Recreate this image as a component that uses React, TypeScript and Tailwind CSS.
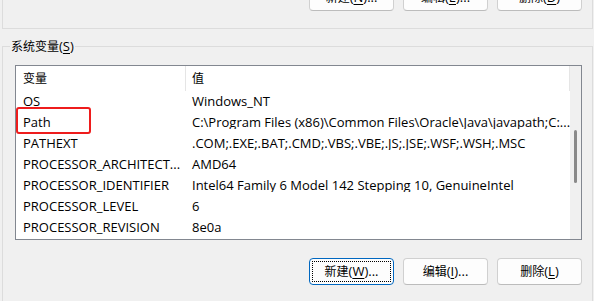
import React from "react";

const rows: [string, string][] = [
  ["OS", "Windows_NT"],
  ["Path", "C:\\Program Files (x86)\\Common Files\\Oracle\\Java\\javapath;C:..."],
  ["PATHEXT", ".COM;.EXE;.BAT;.CMD;.VBS;.VBE;.JS;.JSE;.WSF;.WSH;.MSC"],
  ["PROCESSOR_ARCHITECT...", "AMD64"],
  ["PROCESSOR_IDENTIFIER", "Intel64 Family 6 Model 142 Stepping 10, GenuineIntel"],
  ["PROCESSOR_LEVEL", "6"],
  ["PROCESSOR_REVISION", "8e0a"],
];

function Btn({ cjk, hot, tail, focused }: { cjk: string; hot: string; tail: string; focused?: boolean }) {
  return (
    <div
      className={
        focused
          ? "relative w-[85px] h-[27px] rounded-[4px] border border-[#0067c0] bg-[#fdfdfd] flex items-center justify-center"
          : "relative w-[85px] h-[27px] rounded-[4px] border border-[#d0d0d0] border-b-[#bcbcbc] bg-[#fdfdfd] flex items-center justify-center"
      }
    >
      {focused && <span className="absolute inset-[2px] border border-dotted border-black" />}
      <span className="text-[12px]">{cjk}</span>
      <span className="text-[13px]">
        (<span className="underline underline-offset-[2px]">{hot}</span>){tail}
      </span>
    </div>
  );
}

export default function App() {
  return (
    <div className="w-[594px] h-[301px] overflow-hidden bg-[#f0f0f0] text-black font-['Open_Sans','Noto_Sans_CJK_SC',sans-serif] text-[13px] leading-none">
      {/* upper group (user variables), only its bottom visible */}
      <div className="ml-[2px] mr-[1px] -mt-[20px] h-[49px] border border-t-0 border-[#dcdcdc] flex justify-end items-start pt-[4px] pr-[10px] gap-[9px]">
        <Btn cjk="新建" hot="N" tail="..." />
        <Btn cjk="编辑" hot="E" tail="..." />
        <Btn cjk="删除" hot="D" tail="" />
      </div>

      <fieldset className="ml-[2px] mr-[1px] mt-[9px] border border-[#dcdcdc] pb-[40px]">
        <legend className="ml-[7px] px-[1px] h-[16px] leading-[16px]">
          <span className="text-[12px]">系统变量</span>
          <span className="text-[13px]">
            (<span className="underline underline-offset-[2px]">S</span>)
          </span>
        </legend>

        <div className="relative ml-[12px] mt-[11px] w-[567px] h-[175px] border border-[#828790] bg-white flex">
          <div className="flex-1 flex flex-col">
            <div className="flex h-[25px] items-center">
              <div className="w-[170px] h-full pl-[7px] border-r border-[#e5e5e5] flex items-center text-[12px]">变量</div>
              <div className="flex-1 h-full pl-[6px] border-r border-[#e5e5e5] flex items-center text-[12px]">值</div>
            </div>
            {rows.map(([k, v]) => (
              <div key={k} className="flex h-[21px] items-center whitespace-nowrap">
                <div className="w-[170px] pl-[7px] overflow-hidden">{k}</div>
                <div className="flex-1 pl-[6px] overflow-hidden">{v}</div>
              </div>
            ))}
          </div>
          <div className="w-[17px] bg-[#f0f0f0] flex flex-col items-center pt-[64px]">
            <div className="w-[3px] h-[53px] rounded-full bg-[#8a8a8a]" />
          </div>
          <div className="absolute left-0 top-[41px] w-[75px] h-[27px] border-2 border-[#ee1c1c] rounded-[3px]" />
        </div>

        <div className="mt-[18px] flex justify-end pr-[10px] gap-[9px]">
          <Btn cjk="新建" hot="W" tail="..." focused />
          <Btn cjk="编辑" hot="I" tail="..." />
          <Btn cjk="删除" hot="L" tail="" />
        </div>
      </fieldset>
    </div>
  );
}
